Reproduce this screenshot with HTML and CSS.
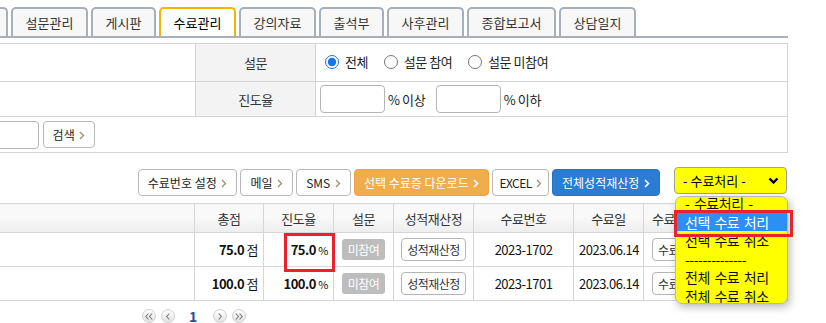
FILE: index.html
```html
<!DOCTYPE html>
<html>

<head>
    <meta charset="UTF-8">
    <title>수료관리</title>
    <link rel="stylesheet" href="styles.css">
</head>

<body>
    <div class="wrap">
        <ul class="tabs">
            <li>과정정보</li>
            <li>설문관리</li>
            <li class="w3">게시판</li>
            <li class="on">수료관리</li>
            <li>강의자료</li>
            <li class="w3">출석부</li>
            <li>사후관리</li>
            <li class="w5">종합보고서</li>
            <li>상담일지</li>
        </ul>

        <!-- 검색 -->
        <table class="search">
            <colgroup>
                <col class="c_left">
                <col class="c_label">
                <col>
            </colgroup>
            <tr class="r1">
                <td></td>
                <th>설문</th>
                <td>
                    <label class="rd"><input type="radio" name="poll" checked>전체</label>
                    <label class="rd"><input type="radio" name="poll">설문 참여</label>
                    <label class="rd"><input type="radio" name="poll">설문 미참여</label>
                </td>
            </tr>
            <tr class="r2">
                <td></td>
                <th>진도율</th>
                <td>
                    <input class="num" type="text"><span class="unit">% 이상</span>
                    <input class="num" type="text"><span class="unit">% 이하</span>
                </td>
            </tr>
            <tr class="r3">
                <td colspan="3">
                    <input class="keyword" type="text"><button class="btn btn_search">검색 <svg class="arr" width="6" height="9" viewBox="0 0 6 9"><polyline points="1,1 4.5,4.5 1,8" /></svg></button>
                </td>
            </tr>
        </table>

        <!-- 버튼 -->
        <div class="toolbar">
            <button class="btn">수료번호 설정 <svg class="arr" width="6" height="9" viewBox="0 0 6 9"><polyline points="1,1 4.5,4.5 1,8" /></svg></button>
            <button class="btn">메일 <svg class="arr" width="6" height="9" viewBox="0 0 6 9"><polyline points="1,1 4.5,4.5 1,8" /></svg></button>
            <button class="btn">SMS <svg class="arr" width="6" height="9" viewBox="0 0 6 9"><polyline points="1,1 4.5,4.5 1,8" /></svg></button>
            <button class="btn btn_orange">선택 수료증 다운로드 <svg class="arr" width="6" height="9" viewBox="0 0 6 9"><polyline points="1,1 4.5,4.5 1,8" /></svg></button>
            <button class="btn btn_excel">EXCEL <svg class="arr" width="6" height="9" viewBox="0 0 6 9"><polyline points="1,1 4.5,4.5 1,8" /></svg></button>
            <button class="btn btn_blue">전체성적재산정 <svg class="arr" width="6" height="9" viewBox="0 0 6 9"><polyline points="1,1 4.5,4.5 1,8" /></svg></button>
            <div class="select">
                <span>- 수료처리 -</span>
                <svg class="chev" width="11" height="8" viewBox="0 0 11 8"><polyline points="1.5,1.5 5.5,5.5 9.5,1.5" /></svg>
                <div class="options">
                    <ul>
                        <li>- 수료처리 -</li>
                        <li class="sel">선택 수료 처리</li>
                        <li>선택 수료 취소</li>
                        <li>--------------</li>
                        <li>전체 수료 처리</li>
                        <li>전체 수료 취소</li>
                    </ul>
                </div>
                <div class="mark_opt"></div>
            </div>
        </div>

        <!-- 목록 -->
        <table class="list">
            <colgroup>
                <col class="w_name">
                <col class="w_score">
                <col class="w_rate">
                <col class="w_poll">
                <col class="w_calc">
                <col class="w_no">
                <col class="w_date">
                <col>
            </colgroup>
            <tr>
                <th></th>
                <th>총점</th>
                <th>진도율</th>
                <th>설문</th>
                <th>성적재산정</th>
                <th>수료번호</th>
                <th>수료일</th>
                <th class="left">수료</th>
            </tr>
            <tr>
                <td></td>
                <td class="right"><b>75.0</b> 점</td>
                <td class="right rate"><b>75.0</b> <small>%</small><div class="mark"></div></td>
                <td><span class="badge">미참여</span></td>
                <td><button class="btn_sm">성적재산정</button></td>
                <td>2023-1702</td>
                <td>2023.06.14</td>
                <td class="left"><button class="btn_sm">수료</button></td>
            </tr>
            <tr>
                <td></td>
                <td class="right"><b>100.0</b> 점</td>
                <td class="right"><b>100.0</b> <small>%</small></td>
                <td><span class="badge">미참여</span></td>
                <td><button class="btn_sm">성적재산정</button></td>
                <td>2023-1701</td>
                <td>2023.06.14</td>
                <td class="left"><button class="btn_sm">수료</button></td>
            </tr>
        </table>

        <!-- 페이지 -->
        <div class="paging">
            <span class="pg"><svg width="8" height="7" viewBox="0 0 8 7"><polyline points="3.5,0.5 0.8,3.5 3.5,6.5" /><polyline points="7.2,0.5 4.5,3.5 7.2,6.5" /></svg></span>
            <span class="pg"><svg width="8" height="7" viewBox="0 0 8 7"><polyline points="5.3,0.5 2.6,3.5 5.3,6.5" /></svg></span>
            <span class="cur">1</span>
            <span class="pg"><svg width="8" height="7" viewBox="0 0 8 7"><polyline points="2.7,0.5 5.4,3.5 2.7,6.5" /></svg></span>
            <span class="pg"><svg width="8" height="7" viewBox="0 0 8 7"><polyline points="0.8,0.5 3.5,3.5 0.8,6.5" /><polyline points="4.5,0.5 7.2,3.5 4.5,6.5" /></svg></span>
        </div>
    </div>
</body>

</html>
```

FILE: styles.css
```css
body {
    margin: 0;
    font-family: "Noto Sans CJK KR", "Noto Sans", sans-serif;
    font-size: 12px;
    color: #222;
    background-color: #FFF;
}

.wrap {
    width: 857px;
    margin-left: -69px;
}

/* 탭 */
.tabs {
    display: flex;
    gap: 3px;
    height: 29px;
    margin: 7px 0 0;
    padding: 0;
    list-style: none;
    border-bottom: 2px solid #A6AFBA;
}

.tabs li {
    width: 73px;
    height: 27px;
    line-height: 27px;
    text-align: center;
    border: 2px solid #A6AFBA;
    border-bottom: 0;
    border-radius: 5px 5px 0 0;
    background-color: #F7F7F7;
    font-size: 13px;
    color: #333;
}

.tabs li.w3 {
    width: 61px;
}

.tabs li.w5 {
    width: 85px;
}

.tabs li.on {
    border-color: #F5B400;
    background-color: #FFF;
    color: #000;
}

/* 검색 */
.search {
    width: 100%;
    margin-top: 5px;
    border-collapse: collapse;
    table-layout: fixed;
}

.c_left {
    width: 264px;
}

.c_label {
    width: 120px;
}

.search th,
.search td {
    border: 1px solid #D4D4D4;
    padding: 0 8px;
    font-size: 13px;
    letter-spacing: -0.4px;
}

.search th {
    font-weight: normal;
    background-color: #F3F3F3;
    color: #333;
}

.search .r1 td,
.search .r1 th {
    height: 37px;
}

.search .r2 td,
.search .r2 th {
    height: 34px;
}

.search .r2 td {
    padding-left: 4px;
}

.search .r3 td {
    height: 35px;
    padding-left: 6px;
}

.rd {
    display: inline-flex;
    align-items: center;
    margin-right: 12px;
}

.rd input {
    width: 14px;
    height: 14px;
    margin: 0 6px 0 1px;
    accent-color: #1A73E8;
}

.num {
    width: 65px;
    height: 28px;
    box-sizing: border-box;
    border: 1px solid #B5B5B5;
    border-radius: 4px;
    vertical-align: middle;
    margin: 0;
}

.unit {
    display: inline-block;
    margin: 0 8px 0 3px;
    vertical-align: middle;
}

.keyword {
    width: 101px;
    height: 28px;
    box-sizing: border-box;
    border: 1px solid #B5B5B5;
    border-radius: 4px;
    vertical-align: middle;
    margin: 0 4px 0 0;
}

/* 버튼 */
.btn {
    height: 27px;
    padding: 0 9px;
    border: 1px solid #B9B9B9;
    border-radius: 4px;
    background-color: #FFF;
    font-family: inherit;
    font-size: 12px;
    color: #222;
    vertical-align: middle;
}

.btn .arr {
    margin-left: 2px;
    fill: none;
    stroke: #9A8A70;
    stroke-width: 1.2;
}

.btn_search {
    width: 52px;
    padding: 0;
}

.btn_excel {
    padding: 0 6px;
    letter-spacing: -0.5px;
}

.btn_orange {
    background-color: #F0AD4E;
    border-color: #ECA545;
    color: #FFF;
}

.btn_blue {
    background-color: #2B7CD3;
    border-color: #2872C4;
    color: #FFF;
}

.btn_orange .arr,
.btn_blue .arr {
    stroke: #FFF;
    stroke-width: 1.6;
}

.toolbar {
    display: flex;
    justify-content: flex-end;
    align-items: flex-start;
    gap: 3px;
    margin-top: 14px;
    padding-right: 1px;
}

.toolbar .btn {
    margin-top: 2px;
}

/* 수료처리 셀렉트 */
.select {
    position: relative;
    display: flex;
    align-items: center;
    justify-content: space-between;
    width: 113px;
    height: 27px;
    box-sizing: border-box;
    margin-left: 11px;
    padding: 0 7px 0 8px;
    border: 1px solid #A0A0A0;
    border-radius: 4px;
    background-color: #FFFF00;
    font-size: 13px;
    color: #000;
}

.chev {
    fill: none;
    stroke: #000;
    stroke-width: 2.4;
}

.options {
    position: absolute;
    top: 28px;
    left: 0;
    width: 113px;
    height: 108px;
    box-sizing: border-box;
    border: 1px solid #B8B8B8;
    border-radius: 7px;
    background-color: #FFFF00;
    box-shadow: 2px 3px 9px rgba(0, 0, 0, 0.28);
    overflow: hidden;
    z-index: 2;
}

.options ul {
    margin: -3px 0 0;
    padding: 0;
    list-style: none;
}

.options li {
    height: 18.5px;
    line-height: 18.5px;
    padding-left: 9px;
    font-size: 14px;
    letter-spacing: -0.5px;
    word-spacing: 2px;
    color: #111;
    white-space: nowrap;
}

.options li.sel {
    background-color: #2B8FF3;
    color: #FFF;
}

.mark_opt {
    position: absolute;
    top: 42px;
    left: -1px;
    width: 119px;
    height: 27px;
    box-sizing: border-box;
    border: 3px solid #E8232B;
    z-index: 3;
}

/* 목록 */
.list {
    width: 100%;
    margin-top: 7px;
    border-collapse: collapse;
    table-layout: fixed;
}

.w_name {
    width: 263px;
}

.w_score {
    width: 69px;
}

.w_rate {
    width: 70px;
}

.w_poll {
    width: 60px;
}

.w_calc {
    width: 80px;
}

.w_no {
    width: 100px;
}

.w_date {
    width: 70px;
}

.list th,
.list td {
    border: 1px solid #D6D6D6;
    text-align: center;
    padding: 0 5px;
    font-size: 13px;
    letter-spacing: -0.5px;
}

.list th {
    height: 28px;
    font-weight: normal;
    color: #333;
    background: linear-gradient(#F9F9F9 45%, #EDEDED 100%);
}

.list td {
    height: 33px;
    color: #111;
}

.list td b {
    font-weight: bold;
}

.list td small {
    font-size: 11px;
}

.list .right {
    text-align: right;
}

.list .left {
    text-align: left;
    padding-left: 8px;
}

.list .rate {
    position: relative;
}

.mark {
    position: absolute;
    left: 20px;
    top: 0;
    width: 51px;
    height: 39px;
    box-sizing: border-box;
    border: 3px solid #E8232B;
}

.badge {
    display: inline-block;
    padding: 0 6px;
    height: 21px;
    line-height: 21px;
    border-radius: 3px;
    background-color: #BDBDBD;
    color: #FFF;
    font-size: 12px;
}

.btn_sm {
    height: 23px;
    padding: 0 5px;
    border: 1px solid #B5B5B5;
    border-radius: 4px;
    background-color: #FFF;
    font-family: inherit;
    font-size: 12px;
    letter-spacing: -0.5px;
    color: #333;
}

/* 페이지 */
.paging {
    display: flex;
    align-items: center;
    height: 30px;
    padding-left: 211px;
}

.pg {
    display: inline-flex;
    align-items: center;
    justify-content: center;
    width: 12px;
    height: 12px;
    margin-right: 5px;
    border: 1px solid #D0D0D0;
    border-radius: 50%;
    background: linear-gradient(#FFF, #E2E2E2);
}

.pg svg {
    fill: none;
    stroke: #777;
    stroke-width: 1.1;
}

.cur {
    margin: 0 16px 0 9px;
    font-size: 14px;
    font-weight: bold;
    color: #2A4F96;
}
```
